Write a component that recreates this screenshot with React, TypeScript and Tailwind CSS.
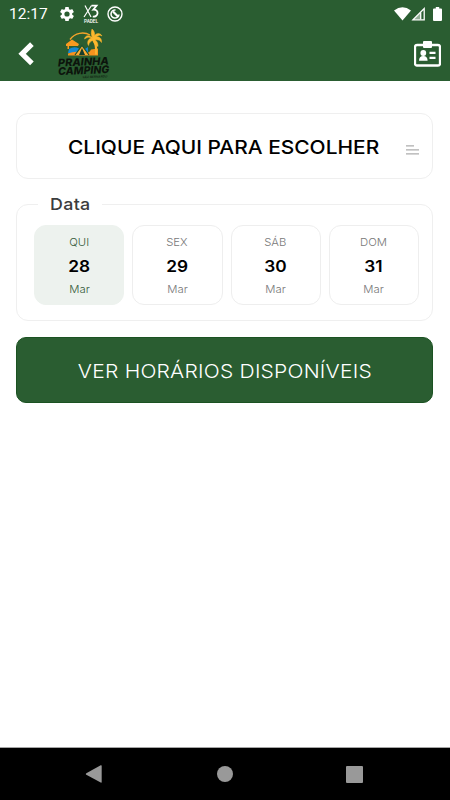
type Day = { week: string; day: number; month: string };

const days: Day[] = [
    { week: 'QUI', day: 28, month: 'Mar' },
    { week: 'SEX', day: 29, month: 'Mar' },
    { week: 'SÁB', day: 30, month: 'Mar' },
    { week: 'DOM', day: 31, month: 'Mar' },
];

export default function App() {
    return (
        <div className="h-[800px] w-[450px] flex flex-col overflow-hidden bg-white font-['Inter',sans-serif]">
            <header className="h-[81px] shrink-0 bg-[#2a5d31] text-white">
                <StatusBar />
                <div className="h-[54px] flex items-center pl-[17px] pr-[9px]">
                    <button type="button" aria-label="Voltar">
                        <svg width="17" height="24" viewBox="0 0 17 24" fill="none" stroke="currentColor" strokeWidth="5.2">
                            <path d="M14.9 2.2 5.1 11.8l9.8 9.6" />
                        </svg>
                    </button>
                    <Logo />
                    <button type="button" aria-label="Reservas" className="ml-auto">
                        <BadgeIcon />
                    </button>
                </div>
            </header>

            <main className="flex-1 pl-4 pr-[17px] pt-8">
                <button type="button" className="w-full h-[66px] flex items-center rounded-xl border border-[#efefef] pl-[51px] pr-[12px]">
                    <span className="inline-block origin-left scale-x-[1.085] pt-[3px] text-[19.3px] font-medium text-black whitespace-nowrap">CLIQUE AQUI PARA ESCOLHER</span>
                    <svg className="ml-auto mt-2" width="14" height="10" viewBox="0 0 14 10" fill="#adadad">
                        <path d="M0 .3h8v1.2H0zM0 4.2h13v1.4H0zM0 8.2h13v1.4H0z" />
                    </svg>
                </button>

                <fieldset className="mt-3.5 h-[128px] rounded-xl border border-[#efefef] pl-[17px] pr-[13px]">
                    <legend className="ml-1 px-3 h-[22px] leading-[22px] text-[16.5px] font-medium text-[#3c3c3c]">
                        <span className="inline-block scale-x-[1.08] origin-left tracking-[0.3px] pr-0.5">Data</span>
                    </legend>
                    <div className="mt-[10px] flex gap-2">
                        {days.map((d, i) => <DayCard key={d.day} data={d} active={i === 0} />)}
                    </div>
                </fieldset>

                <button type="button" className="mt-4 w-full h-[66px] rounded-[10px] bg-[#2a5d31] border border-[#1b5222] text-white text-[19.3px] font-light whitespace-nowrap">
                    <span className="inline-block scale-x-[1.09] pt-[3px] tracking-[0.2px]">VER HORÁRIOS DISPONÍVEIS</span>
                </button>
            </main>

            <nav className="h-[53px] shrink-0 border-t border-[#a5a5a5] bg-black flex items-center justify-between pl-[85px] pr-[87px] text-[#999]">
                <svg width="18" height="18" viewBox="0 0 18 18" fill="currentColor"><path d="M1.3 8.2 15.7.3q1-.4 1 .7v16q0 1-1 .6L1.3 9.8q-1-.8 0-1.6Z" /></svg>
                <svg width="16" height="16" viewBox="0 0 16 16" fill="currentColor"><circle cx="8" cy="8" r="8" /></svg>
                <svg width="17" height="17" viewBox="0 0 17 17" fill="currentColor"><rect width="17" height="17" rx="1" /></svg>
            </nav>
        </div>
    );
}

function DayCard({ data, active }: { data: Day; active: boolean }) {
    return (
        <button type="button"
            className={'h-20 flex-1 flex flex-col items-center rounded-xl border pt-[9px] ' + (active ? 'bg-[#edf2ee] border-[#edf2ee] text-[#355c3b]' : 'bg-white border-[#eee] text-[#777]')}>
            <span className="h-4 leading-4 text-[10.5px] font-light scale-x-[1.08]">{data.week}</span>
            <span className="h-[31px] leading-[30px] text-base font-semibold text-black scale-x-[1.08]">{data.day}</span>
            <span className="h-3.5 leading-[15px] text-[10.5px] font-light scale-x-[1.08]">{data.month}</span>
        </button>
    );
}

function StatusBar() {
    return (
        <div className="h-[27px] flex items-center pl-[9px] pr-2">
            <span className="w-[50px] pt-px font-['Roboto',sans-serif] text-[15.5px] leading-[27px]">12:17</span>
            <svg width="16" height="16" viewBox="1 2 22 20" fill="currentColor">
                <path d="M19.14 12.94c.04-.3.06-.61.06-.94s-.02-.64-.07-.94l2.03-1.58a.49.49 0 0 0 .12-.61l-1.92-3.32a.49.49 0 0 0-.59-.22l-2.39.96a7 7 0 0 0-1.62-.94l-.36-2.54a.48.48 0 0 0-.48-.41h-3.84a.48.48 0 0 0-.47.41l-.36 2.54a7.4 7.4 0 0 0-1.62.94l-2.39-.96a.48.48 0 0 0-.59.22L2.73 8.87a.48.48 0 0 0 .12.61l2.03 1.58a6 6 0 0 0 0 1.88l-2.03 1.58a.49.49 0 0 0-.12.61l1.92 3.32c.12.22.37.29.59.22l2.39-.96c.5.38 1.03.7 1.62.94l.36 2.54c.05.24.24.41.48.41h3.84c.24 0 .44-.17.47-.41l.36-2.54a7 7 0 0 0 1.62-.94l2.39.96c.22.08.47 0 .59-.22l1.92-3.32a.48.48 0 0 0-.12-.61zM12 15.6a3.6 3.6 0 1 1 0-7.2 3.6 3.6 0 0 1 0 7.2" />
            </svg>
            <svg className="ml-2" width="18" height="20" viewBox="0 0 18 20" fill="none" stroke="currentColor">
                <path d="m2 1.5 6 11.500M8.500 1.500 1 13" strokeWidth="1.2" />
                <path d="M8.500 1.700h5l-3.200 4c6-.5 5.500 7.500-.5 7" strokeWidth="1.800" />
                <text x="1" y="19" textLength="14" fontSize="4.800" fontWeight="500" fontFamily="Roboto, sans-serif" fill="currentColor" stroke="none">PADEL</text>
            </svg>
            <svg className="ml-[6px]" width="16" height="16" viewBox="0 0 16 16" fill="none" stroke="currentColor">
                <circle cx="8" cy="8" r="7" strokeWidth="1.400" />
                <path d="M12 8.500A4 4 0 1 1 8.500 4" strokeWidth="1.600" />
                <path d="M6 5.500 11.500 11" strokeWidth="2.200" />
            </svg>
            <svg className="ml-auto" width="17" height="14" viewBox="0 0 17 14" fill="currentColor">
                <path d="M0 3.500Q8.500-3 17 3.500L8.500 13.500Z" />
            </svg>
            <svg width="15" height="14" viewBox="0 0 15 14" fill="none" stroke="currentColor" strokeWidth="1.300">
                <path d="M2 12.800 13.200 1.600v11.200Z" />
                <path d="M9.700 5.500v7" />
                <path d="M9 6v6.500H3Z" fill="currentColor" stroke="none" opacity=".5" />
            </svg>
            <svg className="ml-[7px]" width="9" height="14" viewBox="0 0 9 14" fill="currentColor">
                <path d="M2.800 0h3.400v1.500H8q1 0 1 1V13q0 1-1 1H1q-1 0-1-1V2.500q0-1 1-1h1.800Z" />
            </svg>
        </div>
    );
}

function Logo() {
    return (
        <svg className="ml-[23px]" width="54" height="52" viewBox="0 0 54 52">
            <path d="M13 11.500C18 4.500 27 3.500 33 7" fill="none" stroke="#f5a42a" strokeWidth="1.300" />
            <path d="M9 16 15 11.500l7 4.500-1 2H12v3H10.500V18H9Z" fill="#f79a20" />
            <path d="M12 21q5-3 10-.5t9-1.500v6H11Z" fill="#1689d2" />
            <path d="M11 25.500q7-3 14-1t9-3l7-1v7H11Z" fill="#f6921e" />
            <path d="m18 27 7-9.500 7 9.500" fill="#ffad32" stroke="#174f32" strokeWidth="1.200" />
            <path d="m25 20-3 7h6Z" fill="#183d2b" />
            <path d="M36 11q4 6 3 15.500" fill="none" stroke="#fab32e" strokeWidth="2.200" />
            <path d="M35.500 9.500C31 6 28 8 27.500 11c3-2 5-2 7-1-4 1-4.500 5-3 7.500.5-3 2.500-4.500 4.500-5 1 4 3 5 5 6 0-3-.5-5-3-6.500 3-.5 5 0 6.500 2.500.5-4-2-6-5-5.500 2-2 4-2 5.500-1-2-3.500-5.500-3-7.500-.5.5-2-.5-5-2.500-6.500-.5 2-1.500 5 .5 8.500Z" fill="#fcb72d" stroke="#fcb72d" strokeWidth=".5" />
            <g fill="#0c140c" fontFamily="Inter, sans-serif" fontWeight="800" fontStyle="italic" transform="rotate(-2.200 27 38)">
                <text x="1" y="37.500" fontSize="10.500" textLength="51" lengthAdjust="spacingAndGlyphs">PRAINHA</text>
                <text x="1" y="46" fontSize="10.500" textLength="51" lengthAdjust="spacingAndGlyphs">CAMPING</text>
                <text x="25" y="50.200" fontSize="3" fontWeight="600" textLength="25" lengthAdjust="spacingAndGlyphs" opacity=".75">SÃO BERNARDO</text>
            </g>
        </svg>
    );
}

function BadgeIcon() {
    return (
        <svg width="27" height="26" viewBox="0 0 27 26" fill="currentColor">
            <path d="M3 4h21a2 2 0 0 1 2 2v16.500a2 2 0 0 1-2 2H3a2 2 0 0 1-2-2V6a2 2 0 0 1 2-2Z" fill="none" stroke="currentColor" strokeWidth="2.300" />
            <rect x="9" y="0" width="9" height="7" rx="1" />
            <circle cx="9.300" cy="12" r="2.900" />
            <path d="M5 19.800q0-4.800 4.300-4.800t4.300 4.800ZM15.500 10.800h6v2.200h-6zM15.500 15.800h6V18h-6z" />
        </svg>
    );
}
